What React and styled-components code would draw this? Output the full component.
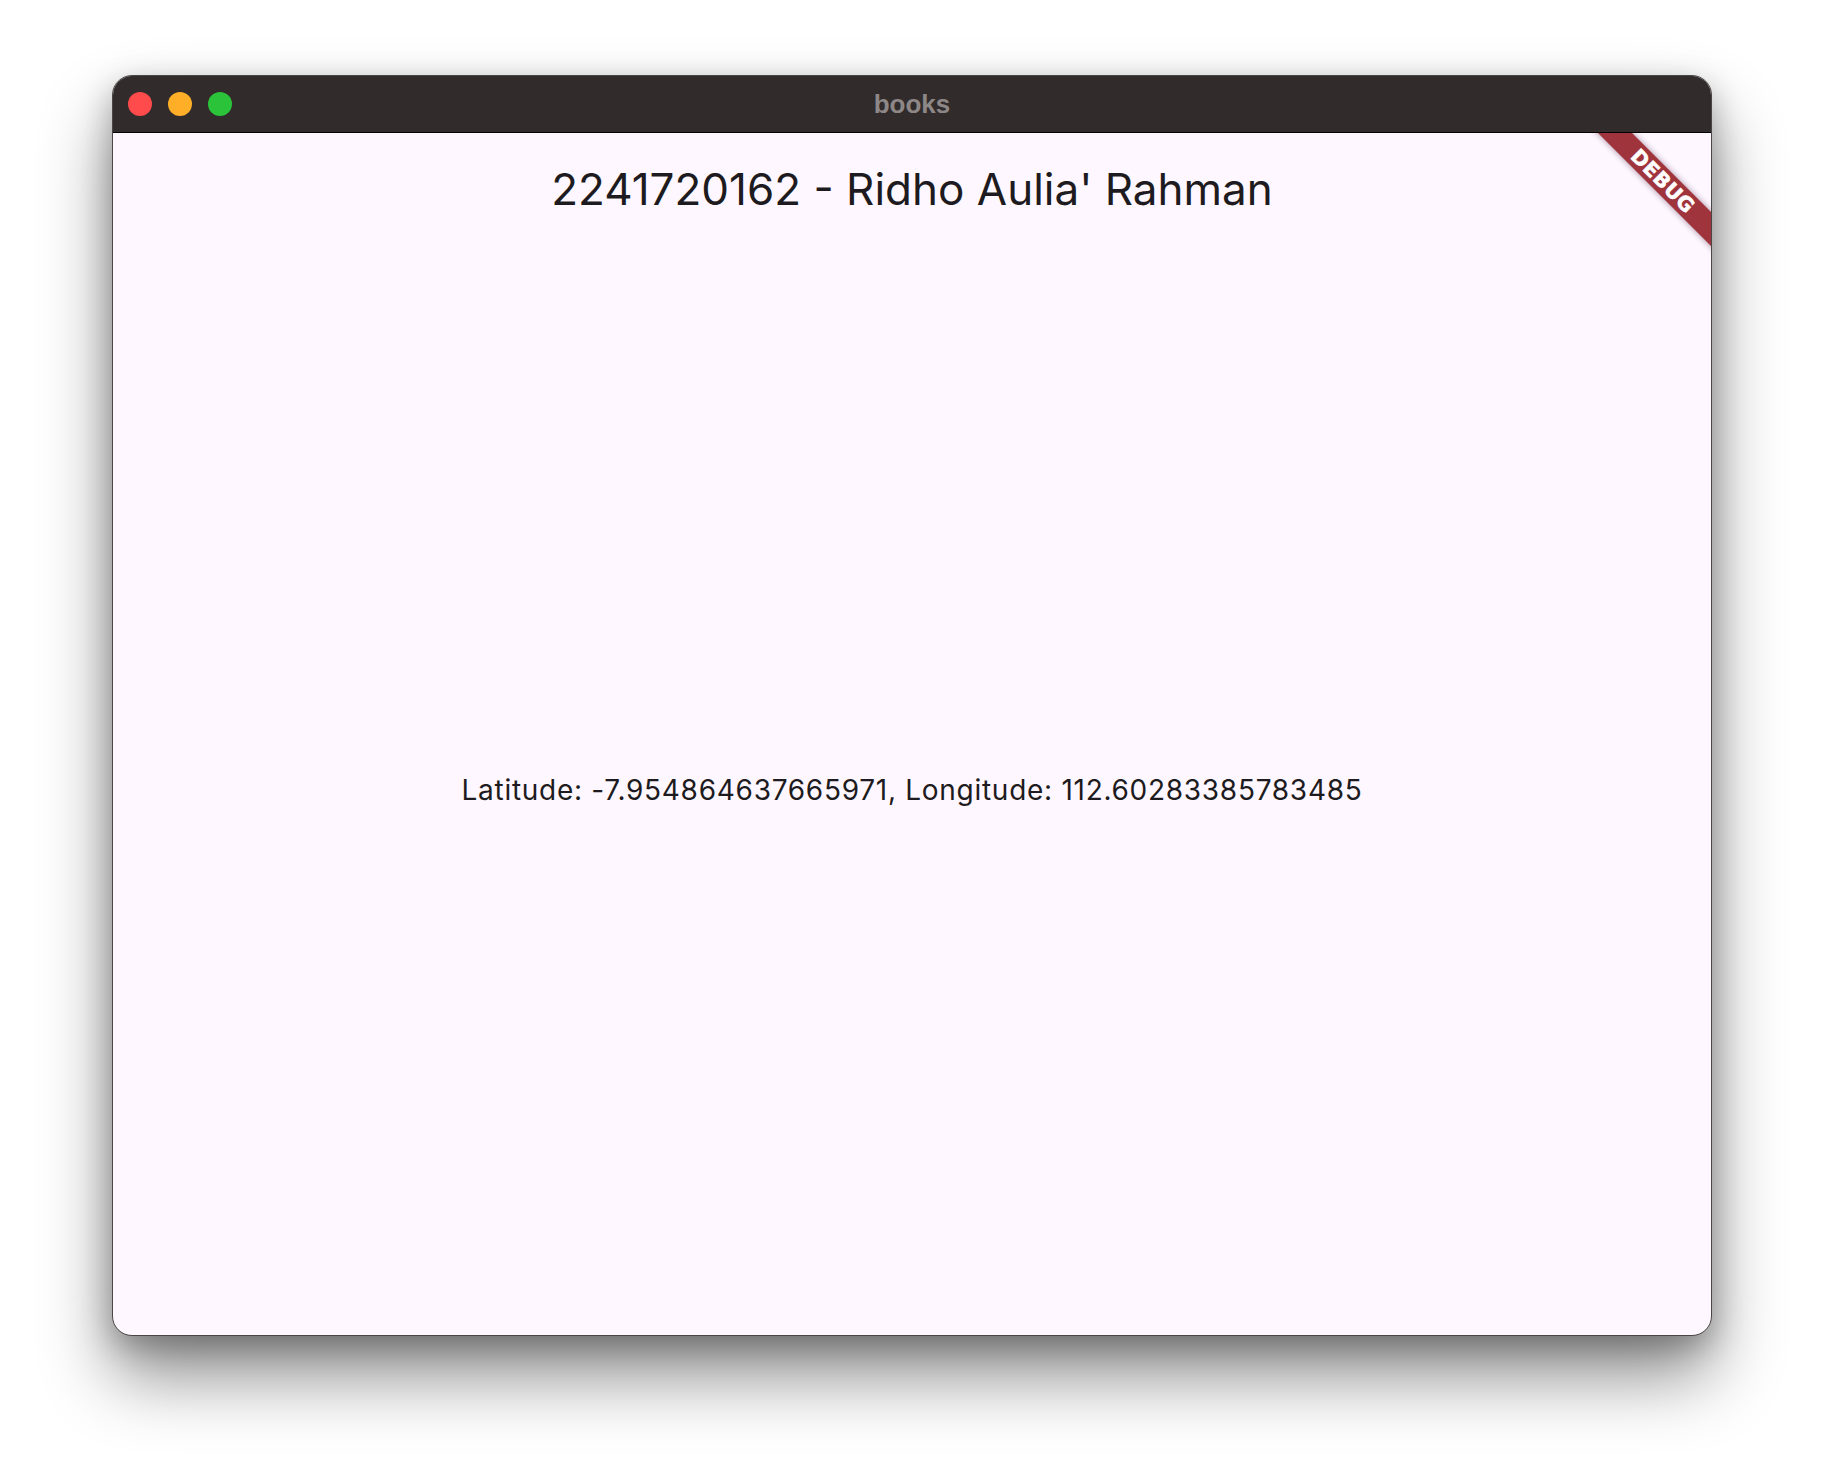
import React from 'react'
import styled, { createGlobalStyle } from 'styled-components'

const GlobalStyle = createGlobalStyle`
  html, body {
    margin: 0;
    padding: 0;
    background: #ffffff;
  }
  body {
    font-family: Inter, 'Noto Sans', sans-serif;
  }
`

const Desktop = styled.div`
  width: 1824px;
  height: 1484px;
  box-sizing: border-box;
  padding: 75px 112px 0;
  background: #ffffff;
`

const Window = styled.div`
  width: 1600px;
  height: 1261px;
  display: flex;
  flex-direction: column;
  border-radius: 20px;
  overflow: hidden;
  background: #fef7ff;
  border: 1px solid #4a4646;
  box-sizing: border-box;
  box-shadow: 0 40px 70px rgba(0, 0, 0, 0.45), 0 10px 30px rgba(0, 0, 0, 0.25);
`

const TitleBar = styled.div`
  position: relative;
  height: 56px;
  flex-shrink: 0;
  display: flex;
  align-items: center;
  gap: 16px;
  padding-left: 15px;
  background: #312b2b;
  border-bottom: 1px solid #000000;
`

const Light = styled.span`
  width: 24px;
  height: 24px;
  border-radius: 50%;
  background: ${({ color }) => color};
`

const WindowTitle = styled.div`
  position: absolute;
  left: 0;
  right: 0;
  top: 0;
  bottom: 0;
  display: flex;
  align-items: center;
  justify-content: center;
  font-family: 'Liberation Sans', Arial, sans-serif;
  font-weight: bold;
  font-size: 26px;
  color: #8d8787;
  pointer-events: none;
`

const Content = styled.div`
  position: relative;
  flex: 1;
  display: flex;
  flex-direction: column;
  overflow: hidden;
`

const AppBar = styled.header`
  height: 112px;
  flex-shrink: 0;
  display: flex;
  align-items: center;
  justify-content: center;
  font-size: 44px;
  color: #1d1b20;
`

const Body = styled.main`
  flex: 1;
  display: flex;
  align-items: center;
  justify-content: center;
  font-size: 28px;
  letter-spacing: 0.72px;
  color: #1d1b20;
`

const DebugBanner = styled.div`
  position: absolute;
  top: 36px;
  right: -52px;
  width: 200px;
  height: 24px;
  transform: rotate(45deg);
  background: #a0343c;
  box-shadow: 0 0 6px rgba(60, 0, 40, 0.45);
  display: flex;
  align-items: center;
  justify-content: center;
  color: #ffffff;
  font-family: 'DejaVu Sans', sans-serif;
  font-weight: bold;
  font-size: 20px;
  letter-spacing: 0.5px;
  -webkit-text-stroke: 0.6px #ffffff;
`

const App = () => {
  return (
    <>
      <GlobalStyle />
      <Desktop>
        <Window>
          <TitleBar>
            <Light color='#ff4b4b' />
            <Light color='#feae27' />
            <Light color='#2ac33a' />
            <WindowTitle>books</WindowTitle>
          </TitleBar>
          <Content>
            <AppBar>2241720162 - Ridho Aulia' Rahman</AppBar>
            <Body>Latitude: -7.954864637665971, Longitude: 112.60283385783485</Body>
            <DebugBanner>DEBUG</DebugBanner>
          </Content>
        </Window>
      </Desktop>
    </>
  )
}

export default App
